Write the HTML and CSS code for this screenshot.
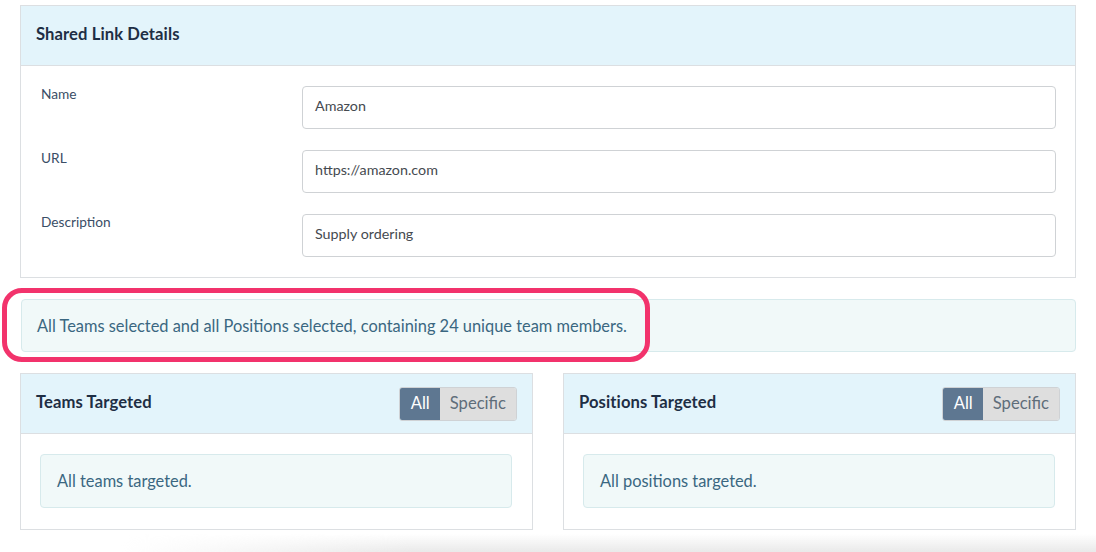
FILE: index.html
```html
<!DOCTYPE html>
<html>
<head>
<meta charset="utf-8">
<link rel="stylesheet" href="styles.css">
</head>
<body>
<div class="page">
  <section class="card">
    <div class="card-header"><h2 class="card-title">Shared Link Details</h2></div>
    <div class="card-body form">
      <label class="form-label">Name</label>
      <div class="form-input">Amazon</div>
      <label class="form-label">URL</label>
      <div class="form-input">https://amazon.com</div>
      <label class="form-label">Description</label>
      <div class="form-input">Supply ordering</div>
    </div>
  </section>

  <div class="summary-wrap">
    <div class="alert summary">All Teams selected and all Positions selected, containing 24 unique team members.</div>
    <div class="highlight"></div>
  </div>

  <div class="columns">
    <section class="card">
      <div class="card-header">
        <h2 class="card-title">Teams Targeted</h2>
        <div class="toggle"><span class="toggle-btn active">All</span><span class="toggle-btn">Specific</span></div>
      </div>
      <div class="card-body">
        <div class="alert inner">All teams targeted.</div>
      </div>
    </section>
    <section class="card">
      <div class="card-header">
        <h2 class="card-title">Positions Targeted</h2>
        <div class="toggle"><span class="toggle-btn active">All</span><span class="toggle-btn">Specific</span></div>
      </div>
      <div class="card-body">
        <div class="alert inner">All positions targeted.</div>
      </div>
    </section>
  </div>
  <div class="shadow"></div>
</div>
</body>
</html>
```

FILE: styles.css
```css
* { box-sizing: border-box; }
html, body { margin: 0; padding: 0; background: #ffffff; }
body {
  font-family: Lato, "Open Sans", "Liberation Sans", sans-serif;
  width: 1096px;
  height: 552px;
  overflow: hidden;
}
.page {
  padding: 5px 20px 0 20px;
  width: 1096px;
  position: relative;
}
.card {
  border: 1px solid #dcdfe2;
  background: #fff;
  width: 1056px;
}
.card-header {
  height: 60px;
  background: #e3f4fb;
  border-bottom: 1px solid #dcdfe2;
  display: flex;
  align-items: center;
  justify-content: space-between;
  padding: 0 15px 0 15px;
}
.card-title {
  margin: 0 0 3px 0;
  font-size: 16.6px;
  font-weight: 700;
  color: #1e2e44;
  letter-spacing: 0.1px;
}
.card-body { padding: 20px 20px 21px 19px; }
.form {
  display: grid;
  grid-template-columns: 261px 1fr;
  row-gap: 21px;
  padding: 20px 19px 20px 20px;
}
.form-label {
  font-size: 13.7px;
  color: #3a4e66;
  padding-top: 0;
  line-height: 16px;
}
.form-input {
  height: 43px;
  border: 1px solid #cfd2d5;
  border-radius: 4px;
  padding: 0 12px 4px 12px;
  display: flex;
  align-items: center;
  font-size: 14.3px;
  color: #454a50;
}
.summary-wrap {
  position: relative;
  margin-top: 21px;
}
.alert {
  background: #f1f9f9;
  border: 1px solid #d7eaec;
  border-radius: 4px;
  color: #3a6781;
  font-size: 16.4px;
  display: flex;
  align-items: center;
}
.summary {
  height: 53px;
  padding-left: 15px;
  margin-left: 1px;
}
.highlight {
  position: absolute;
  left: -18px;
  top: -11px;
  width: 648px;
  height: 74px;
  border: 5px solid #f2336c;
  border-radius: 20px;
}
.columns {
  display: grid;
  grid-template-columns: 513px 513px;
  column-gap: 30px;
  margin-top: 21px;
}
.columns .card { width: 513px; }
.columns .card-header { padding-right: 15px; }
.toggle {
  display: flex;
  height: 34px;
  border-radius: 3px;
  overflow: hidden;
  border: 1px solid #cfd2d5;
}
.toggle-btn {
  display: flex;
  align-items: center;
  padding: 0 10px 2px 10px;
  font-size: 16.6px;
  background: #dedede;
  color: #5f6d7a;
}
.toggle-btn.active {
  background: #5e7791;
  color: #ffffff;
  padding: 0 10px 2px 11px;
}
.inner {
  height: 54px;
  padding-left: 16px;
  padding-bottom: 2px;
}
.shadow {
  position: absolute;
  left: 120px;
  right: 0;
  top: 534px;
  height: 20px;
  background: linear-gradient(to bottom, rgba(235,235,235,0), rgba(228,228,228,0.9));
  -webkit-mask-image: linear-gradient(to right, transparent, #000 30%);
  mask-image: linear-gradient(to right, transparent, #000 30%);
}
```
